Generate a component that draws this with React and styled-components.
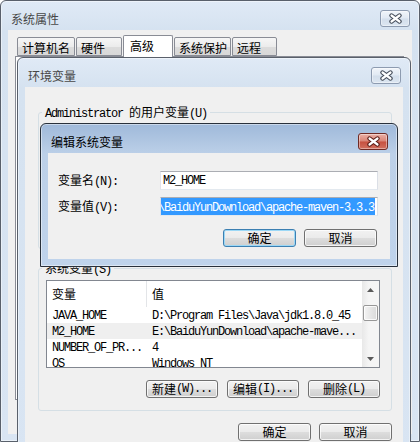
import React from 'react';
import styled, { createGlobalStyle } from 'styled-components';

const GlobalStyle = createGlobalStyle`
  html, body {
    margin: 0;
    padding: 0;
    background: #fff;
  }
  body {
    width: 420px;
    height: 442px;
    overflow: hidden;
    font-family: "Noto Sans CJK SC", "Liberation Sans", sans-serif;
    font-size: 12px;
    line-height: 14px;
    color: #000;
  }
`;

const Desktop = styled.div`
  position: relative;
  width: 420px;
  height: 442px;
  overflow: hidden;
`;

const Latin = styled.span`
  font-family: "Liberation Mono", monospace;
  letter-spacing: -1.2px;
`;

// SimSun draws ASCII at half width, so ASCII runs get a narrowed mono face
function Txt({ children }) {
  return String(children)
    .split(/([\x20-\x7e]+)/)
    .map((part, i) => (i % 2 ? <Latin key={i}>{part}</Latin> : part));
}

/* ---------- window chrome ---------- */

const Frame = styled.div`
  position: absolute;
  left: ${p => p.$x}px;
  top: ${p => p.$y}px;
  width: ${p => p.$w}px;
  height: ${p => p.$h}px;
  box-sizing: border-box;
  display: flex;
  flex-direction: column;
  padding: 0 7px 7px;
  border: 1px solid ${p => (p.$active ? '#28303b' : '#59606b')};
  border-radius: 6px 6px 0 0;
  background: ${p =>
    p.$active
      ? 'linear-gradient(#9fb9da, #bcd0e8 30px, #bfd3eb)'
      : 'linear-gradient(#e0eaf6, #d5e2f0 30px, #d9e5f3)'};
  box-shadow: inset 0 0 0 1px rgba(255, 255, 255, 0.45);
`;

const TitleBar = styled.div`
  flex: none;
  height: 29px;
  box-sizing: border-box;
  padding: 9px 2px 0 3px;
  display: flex;
  align-items: flex-start;
  justify-content: space-between;
`;

const TitleText = styled.div`
  height: 17px;
  line-height: 17px;
  color: ${p => (p.$active ? '#000' : '#474747')};
`;

const CloseButton = styled.div`
  width: 30px;
  height: 17px;
  box-sizing: border-box;
  border-radius: 3px;
  border: 1px solid ${p => (p.$active ? '#6f2a24' : '#8d9bb0')};
  background: ${p =>
    p.$active
      ? 'linear-gradient(#eab0a6, #d98476 48%, #c6503f 52%, #d2705f)'
      : 'linear-gradient(#f1f5fa, #e1e9f3 48%, #d3deeb 52%, #dce6f1)'};
  box-shadow: inset 0 0 0 1px rgba(255, 255, 255, 0.4);
  display: flex;
  align-items: center;
  justify-content: center;
`;

function CloseGlyph({ active }) {
  const d = 'M3.5 2.5 L11.5 8.5 M11.5 2.5 L3.5 8.5';
  return (
    <svg width="15" height="11" viewBox="0 0 15 11">
      <path d={d} stroke={active ? '#5b1c16' : '#434b58'} strokeWidth="4.4" strokeLinecap="round" fill="none" />
      <path d={d} stroke="#fff" strokeWidth="2.2" strokeLinecap="round" fill="none" />
    </svg>
  );
}

const Client = styled.div`
  flex: 1;
  min-height: 0;
  background: #f0f0f0;
  display: flex;
  flex-direction: column;
`;

function Window({ title, active, x, y, w, h, children }) {
  return (
    <Frame $x={x} $y={y} $w={w} $h={h} $active={active}>
      <TitleBar>
        <TitleText $active={active}>{title}</TitleText>
        <CloseButton $active={active}>
          <CloseGlyph active={active} />
        </CloseButton>
      </TitleBar>
      <Client>{children}</Client>
    </Frame>
  );
}

/* ---------- common controls ---------- */

const Button = styled.div`
  width: ${p => p.$w}px;
  height: 18px;
  box-sizing: border-box;
  border: 1px solid ${p => (p.$default ? '#3c7fb1' : '#707070')};
  border-radius: 3px;
  background: linear-gradient(#f2f2f2, #ebebeb 48%, #dddddd 52%, #cfcfcf);
  box-shadow: inset 0 0 0 1px ${p => (p.$default ? '#9cd8f6' : 'rgba(255,255,255,0.75)')};
  display: flex;
  align-items: center;
  justify-content: center;
  white-space: nowrap;
`;

const ButtonRow = styled.div`
  display: flex;
  justify-content: flex-end;
  gap: ${p => p.$gap}px;
  margin-top: ${p => p.$mt}px;
  padding-right: ${p => p.$pr || 0}px;
`;

const Group = styled.fieldset`
  margin: 0 0 ${p => p.$mb || 0}px;
  padding: ${p => p.$pad};
  min-width: 0;
  height: ${p => p.$h}px;
  box-sizing: border-box;
  border: 1px solid #d5dfe5;
  border-radius: 3px;
  display: flex;
  flex-direction: column;
`;

const Legend = styled.legend`
  margin-left: -4px;
  padding: 0 3px;
  line-height: 12px;
  height: 12px;
  white-space: nowrap;
`;

/* ---------- 系统属性 tabs ---------- */

const TabArea = styled.div`
  padding: 5px 0 0 7px;
  display: flex;
  flex-direction: column;
`;

const TabRow = styled.div`
  position: relative;
  z-index: 1;
  height: 22px;
  margin: 0 0 -1px 2px;
  display: flex;
  align-items: flex-end;
  gap: 1px;
`;

const Tab = styled.div`
  width: ${p => p.$w}px;
  height: ${p => (p.$sel ? 22 : 19)}px;
  margin-bottom: ${p => (p.$sel ? 0 : 1)}px;
  box-sizing: border-box;
  padding: ${p => (p.$sel ? '3px 0 0 6px' : '3px 0 0 4px')};
  border: 1px solid #898c95;
  border-bottom: ${p => (p.$sel ? 'none' : '1px solid #898c95')};
  border-radius: 2px 2px 0 0;
  background: ${p => (p.$sel ? '#fff' : 'linear-gradient(#f6f6f6, #ececec 50%, #dcdcdc 52%, #d8d8d8)')};
  white-space: nowrap;
`;

const TabPanel = styled.div`
  width: 389px;
  height: 344px;
  box-sizing: border-box;
  border: 1px solid #898c95;
  background: #fff;
`;

const tabs = [
  { label: '计算机名', w: 58 },
  { label: '硬件', w: 46 },
  { label: '高级', w: 50, sel: true },
  { label: '系统保护', w: 57 },
  { label: '远程', w: 45 },
];

/* ---------- 环境变量 ---------- */

const EnvBody = styled.div`
  padding: 19px 11px 0 13px;
  display: flex;
  flex-direction: column;
`;

const ListView = styled.div`
  height: 88px;
  flex: none;
  box-sizing: border-box;
  border: 1px solid #828790;
  background: #fff;
  display: flex;
`;

const ListMain = styled.div`
  flex: 1;
  min-width: 0;
  overflow: hidden;
  display: flex;
  flex-direction: column;
`;

const Header = styled.div`
  height: 26px;
  flex: none;
  display: flex;
`;

const HeaderCell = styled.div`
  width: ${p => (p.$w ? `${p.$w}px` : 'auto')};
  flex: ${p => (p.$w ? 'none' : 1)};
  box-sizing: border-box;
  padding-left: 5px;
  display: flex;
  align-items: center;
  border-right: ${p => (p.$w ? '1px solid #e3e5e8' : 'none')};
`;

const Row = styled.div`
  height: 16px;
  flex: none;
  display: flex;
  align-items: center;
  background: ${p => (p.$hot ? '#efefef' : 'transparent')};
`;

const Cell = styled.div`
  width: ${p => (p.$w ? `${p.$w}px` : 'auto')};
  flex: ${p => (p.$w ? 'none' : 1)};
  box-sizing: border-box;
  padding-left: 5px;
  white-space: nowrap;
  overflow: hidden;
`;

const ScrollBar = styled.div`
  width: 17px;
  flex: none;
  display: flex;
  flex-direction: column;
  align-items: center;
  background: linear-gradient(to right, #e8e8e8, #f5f5f5 40%, #f5f5f5);
`;

const ScrollArrow = styled.div`
  height: 17px;
  width: 17px;
  display: flex;
  align-items: center;
  justify-content: center;
`;

const Thumb = styled.div`
  width: 15px;
  height: 16px;
  margin-top: 7px;
  box-sizing: border-box;
  border: 1px solid #979797;
  border-radius: 2px;
  background: linear-gradient(to right, #f4f4f4, #e6e6e6 50%, #dadada);
  box-shadow: inset 0 0 0 1px rgba(255, 255, 255, 0.8);
`;

const ScrollGap = styled.div`
  flex: 1;
`;

function Arrow({ down }) {
  return (
    <svg width="7" height="4" viewBox="0 0 7 4">
      <path d={down ? 'M0 0 H7 L3.5 4 Z' : 'M0 4 H7 L3.5 0 Z'} fill="#5a5a5a" />
    </svg>
  );
}

const systemVars = [
  { name: 'JAVA_HOME', value: 'D:\\Program Files\\Java\\jdk1.8.0_45' },
  { name: 'M2_HOME', value: 'E:\\BaiduYunDownload\\apache-mave...', hot: true },
  { name: 'NUMBER_OF_PR...', value: '4' },
  { name: 'OS', value: 'Windows_NT' },
];

/* ---------- 编辑系统变量 ---------- */

const EditBody = styled.div`
  padding: 18px 12px 0 10px;
  display: flex;
  flex-direction: column;
  gap: 7px;
`;

const FieldRow = styled.div`
  height: 19px;
  display: flex;
  align-items: center;
  justify-content: space-between;
`;

const TextBox = styled.div`
  width: 218px;
  height: 19px;
  box-sizing: border-box;
  padding: 0 2px;
  border: 1px solid;
  border-color: #abadb3 #dbdfe6 #e3e9ef #e2e3ea;
  background: #fff;
  overflow: hidden;
  white-space: nowrap;
  display: flex;
  align-items: center;
  justify-content: ${p => (p.$end ? 'flex-end' : 'flex-start')};
`;

const Selection = styled.span`
  flex: none;
  line-height: 15px;
  padding-right: 1px;
  background: #3399ff;
  color: #fff;
`;

export default function App() {
  return (
    <Desktop>
      <GlobalStyle />

      <Window title="系统属性" x={0} y={0} w={420} h={442}>
        <TabArea>
          <TabRow>
            {tabs.map(t => (
              <Tab key={t.label} $w={t.w} $sel={t.sel}>{t.label}</Tab>
            ))}
          </TabRow>
          <TabPanel />
        </TabArea>
      </Window>

      <Window title="环境变量" x={17} y={57} w={394} h={420}>
        <EnvBody>
          <Group $h={143} $mb={13} $pad="6px 11px 12px 7px">
            <Legend><Txt>Administrator 的用户变量(U)</Txt></Legend>
          </Group>
          <Group $h={149} $pad="6px 11px 12px 7px">
            <Legend><Txt>系统变量(S)</Txt></Legend>
            <ListView>
              <ListMain>
                <Header>
                  <HeaderCell $w={100}>变量</HeaderCell>
                  <HeaderCell>值</HeaderCell>
                </Header>
                {systemVars.map(v => (
                  <Row key={v.name} $hot={v.hot}>
                    <Cell $w={100}><Txt>{v.name}</Txt></Cell>
                    <Cell><Txt>{v.value}</Txt></Cell>
                  </Row>
                ))}
              </ListMain>
              <ScrollBar>
                <ScrollArrow><Arrow /></ScrollArrow>
                <Thumb />
                <ScrollGap />
                <ScrollArrow><Arrow down /></ScrollArrow>
              </ScrollBar>
            </ListView>
            <ButtonRow $gap={9} $mt={12}>
              <Button $w={72}><Txt>新建(W)...</Txt></Button>
              <Button $w={72}><Txt>编辑(I)...</Txt></Button>
              <Button $w={72}><Txt>删除(L)</Txt></Button>
            </ButtonRow>
          </Group>
          <ButtonRow $gap={8} $mt={12}>
            <Button $w={73}>确定</Button>
            <Button $w={73}>取消</Button>
          </ButtonRow>
        </EnvBody>
      </Window>

      <Window title="编辑系统变量" active x={40} y={123} w={358} h={144}>
        <EditBody>
          <FieldRow>
            <span><Txt>变量名(N):</Txt></span>
            <TextBox><Txt>M2_HOME</Txt></TextBox>
          </FieldRow>
          <FieldRow>
            <span><Txt>变量值(V):</Txt></span>
            <TextBox $end>
              <Selection><Txt>E:\BaiduYunDownload\apache-maven-3.3.3</Txt></Selection>
            </TextBox>
          </FieldRow>
          <ButtonRow $gap={8} $mt={6} $pr={1}>
            <Button $w={73} $default>确定</Button>
            <Button $w={73}>取消</Button>
          </ButtonRow>
        </EditBody>
      </Window>
    </Desktop>
  );
}
